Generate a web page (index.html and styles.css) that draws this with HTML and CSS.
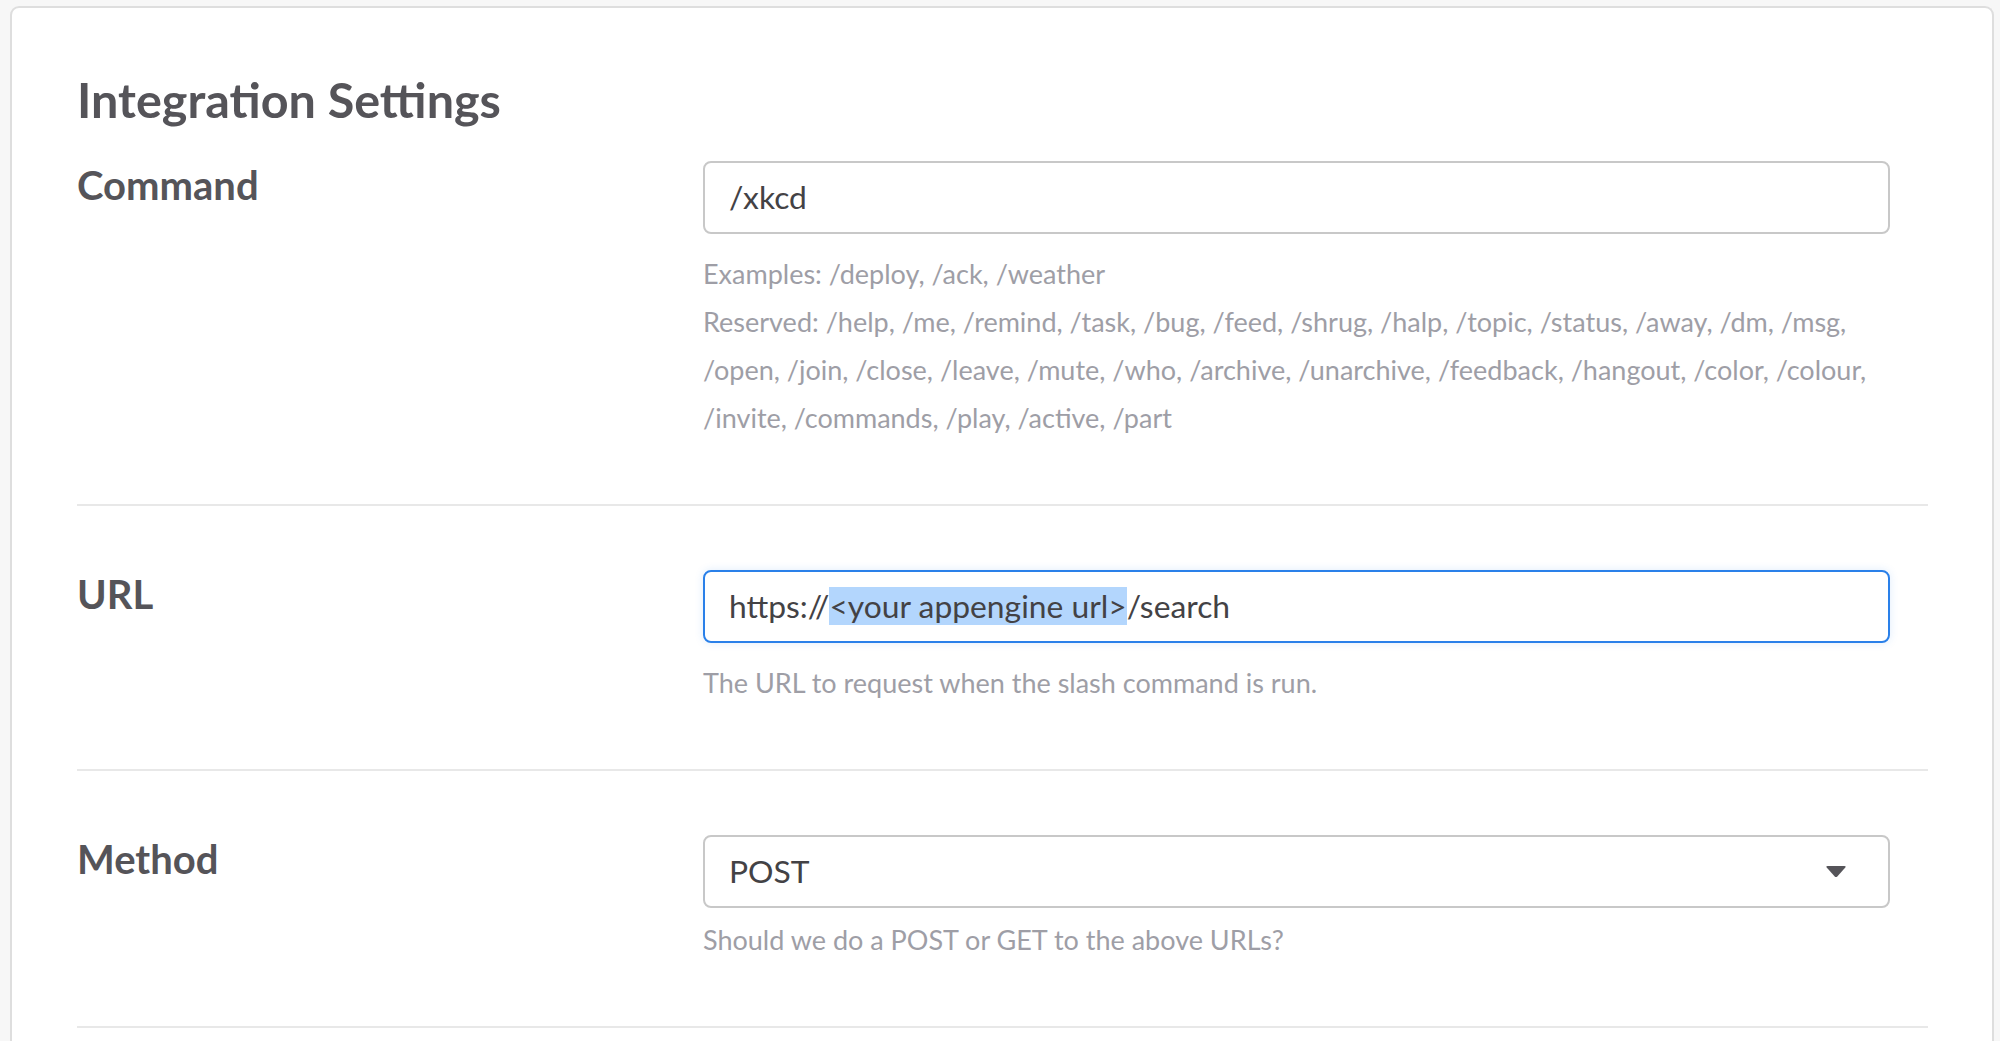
FILE: index.html
```html
<!DOCTYPE html>
<html>
<head>
<meta charset="utf-8">
<link rel="stylesheet" href="styles.css">
</head>
<body>
<div class="card">
  <h2 class="title">Integration Settings</h2>

  <div class="row first">
    <div class="label">Command</div>
    <div class="field">
      <div class="input">/xkcd</div>
      <div class="note">
        <div>Examples: /deploy, /ack, /weather</div>
        <div>Reserved: /help, /me, /remind, /task, /bug, /feed, /shrug, /halp, /topic, /status, /away, /dm, /msg, /open, /join, /close, /leave, /mute, /who, /archive, /unarchive, /feedback, /hangout, /color, /colour, /invite, /commands, /play, /active, /part</div>
      </div>
    </div>
  </div>

  <div class="row">
    <div class="label">URL</div>
    <div class="field">
      <div class="input focused">https://<span class="sel">&lt;your appengine url&gt;</span>/search</div>
      <div class="note">The URL to request when the slash command is run.</div>
    </div>
  </div>

  <div class="row">
    <div class="label">Method</div>
    <div class="field">
      <div class="input select">
        <span>POST</span>
        <svg class="caret" width="22" height="13" viewBox="0 0 22 13"><path d="M2.5 1 H19.5 Q21.5 1 20.3 2.6 L12.3 11.4 Q11 12.8 9.7 11.4 L1.7 2.6 Q0.5 1 2.5 1 Z" fill="#555459"/></svg>
      </div>
      <div class="note tight">Should we do a POST or GET to the above URLs?</div>
    </div>
  </div>
</div>
</body>
</html>
```

FILE: styles.css
```css
html, body {
  margin: 0;
  padding: 0;
  background: #f7f7f7;
}
body {
  font-family: Lato, "Open Sans", sans-serif;
  color: #555459;
  height: 1041px;
  overflow: hidden;
}
.card {
  margin: 6px 6px 0 10px;
  background: #fff;
  border: 2px solid #dedede;
  border-bottom: none;
  border-radius: 9px 9px 0 0;
  padding: 61px 64px 0 65px;
  height: 1100px;
}
.title {
  margin: 0;
  font-size: 48.5px;
  line-height: 60px;
  font-weight: 700;
  color: #555459;
}
.row {
  display: flex;
  padding: 64px 0 62px;
  border-bottom: 2px solid #e8e8e8;
}
.row.first {
  padding-top: 32px;
}
.label {
  width: 626px;
  flex: none;
  font-size: 40px;
  line-height: 48px;
  font-weight: 700;
}
.field {
  width: 1187px;
  flex: none;
}
.input {
  box-sizing: border-box;
  height: 73px;
  border: 2px solid #c8c8c8;
  border-radius: 8px;
  padding: 0 24px;
  font-size: 31.8px;
  line-height: 69px;
  color: #434245;
  white-space: nowrap;
}
.input.focused {
  border-color: #2a80e9;
  box-shadow: 0 0 8px rgba(42, 128, 233, 0.15);
}
.sel {
  background: #b3d6fd;
}
.select {
  display: flex;
  justify-content: space-between;
  align-items: center;
  padding-right: 41px;
}
.caret {
  display: block;
}
.note {
  margin-top: 16px;
  font-size: 27px;
  line-height: 48px;
  color: #9e9ea6;
}
.note.tight {
  margin-top: 8px;
}
```
